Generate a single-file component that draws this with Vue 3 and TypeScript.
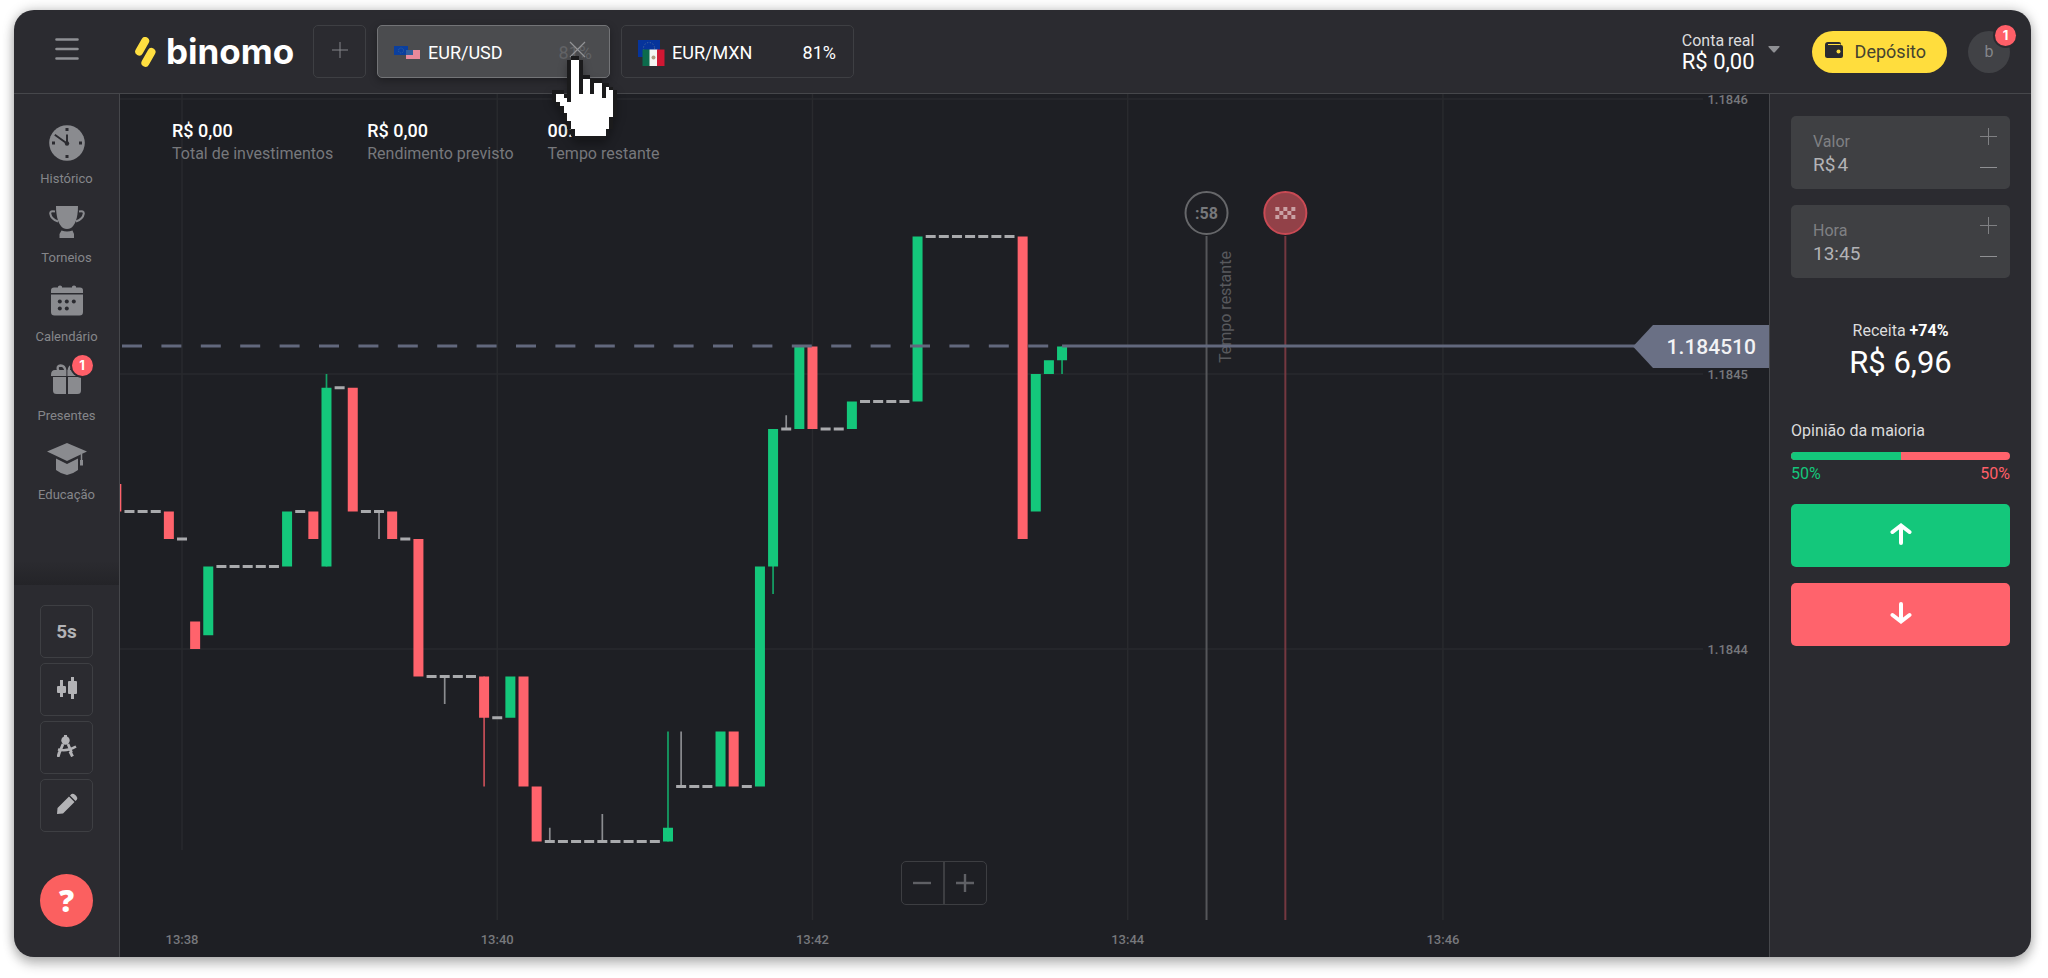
<script setup lang="ts">
import { computed, ref } from 'vue'

type Kind = 'up' | 'down' | 'flat'

interface Candle {
  n: number
  top: number
  bottom: number
  kind: Kind
  wickTop?: number
  wickBottom?: number
}

const STEP_X = 13.135
const STEP_Y = 13.75
const ORIGIN_X = 62
const ORIGIN_Y = 280

const xAt = (n: number): number => ORIGIN_X + n * STEP_X
const yAt = (level: number): number => ORIGIN_Y + level * STEP_Y

const up = (n: number, top: number, bottom: number, wick: Partial<Candle> = {}): Candle => ({ n, top, bottom, kind: 'up', ...wick })
const down = (n: number, top: number, bottom: number, wick: Partial<Candle> = {}): Candle => ({ n, top, bottom, kind: 'down', ...wick })
const flat = (from: number, to: number, level: number): Candle[] =>
  Array.from({ length: to - from + 1 }, (_, i) => ({ n: from + i, top: level, bottom: level, kind: 'flat' as Kind }))
const flatWick = (n: number, level: number, wick: Partial<Candle>): Candle => ({ n, top: level, bottom: level, kind: 'flat', ...wick })

const candles: Candle[] = [
  down(-5, 8, 10),
  ...flat(-4, -2, 10),
  down(-1, 10, 12),
  ...flat(0, 0, 12),
  down(1, 18, 20),
  up(2, 14, 19),
  ...flat(3, 7, 14),
  up(8, 10, 14),
  ...flat(9, 9, 10),
  down(10, 10, 12),
  up(11, 1, 14, { wickTop: 0 }),
  ...flat(12, 12, 1),
  down(13, 1, 10),
  ...flat(14, 14, 10),
  flatWick(15, 10, { wickBottom: 12 }),
  down(16, 10, 12),
  ...flat(17, 17, 12),
  down(18, 12, 22),
  ...flat(19, 19, 22),
  flatWick(20, 22, { wickBottom: 24 }),
  ...flat(21, 22, 22),
  down(23, 22, 25, { wickBottom: 30 }),
  ...flat(24, 24, 25),
  up(25, 22, 25),
  down(26, 22, 30),
  down(27, 30, 34),
  flatWick(28, 34, { wickTop: 33 }),
  ...flat(29, 31, 34),
  flatWick(32, 34, { wickTop: 32 }),
  ...flat(33, 36, 34),
  up(37, 33, 34, { wickTop: 26 }),
  flatWick(38, 30, { wickTop: 26 }),
  ...flat(39, 40, 30),
  up(41, 26, 30),
  down(42, 26, 30),
  ...flat(43, 43, 30),
  up(44, 14, 30),
  up(45, 4, 14, { wickBottom: 16 }),
  flatWick(46, 4, { wickTop: 3 }),
  up(47, -2, 4),
  down(48, -2, 4),
  ...flat(49, 50, 4),
  up(51, 2, 4),
  ...flat(52, 55, 2),
  up(56, -10, 2),
  ...flat(57, 63, -10),
  down(64, -10, 12),
  up(65, 0, 10),
  up(66, -1, 0),
  up(67, -2, -1, { wickBottom: 0 }),
]

const shapes = computed(() =>
  candles.map((c) => ({
    key: c.n,
    kind: c.kind,
    x: xAt(c.n) - 5,
    y: c.kind === 'flat' ? yAt(c.top) - 1.5 : yAt(c.top),
    height: c.kind === 'flat' ? 3 : yAt(c.bottom) - yAt(c.top),
    wick:
      c.wickTop !== undefined || c.wickBottom !== undefined
        ? { x: xAt(c.n), y1: yAt(c.wickTop ?? c.top), y2: yAt(c.wickBottom ?? c.bottom) }
        : null,
  })),
)

const times = [
  { label: '13:38', n: 0, end: 756 },
  { label: '13:40', n: 24, end: 826 },
  { label: '13:42', n: 48, end: 826 },
  { label: '13:44', n: 72, end: 826 },
  { label: '13:46', n: 96, end: 826 },
]
const prices = [
  { label: '1.1846', level: -20 },
  { label: '1.1845', level: 0 },
  { label: '1.1844', level: 20 },
]

const summary = [
  { value: 'R$ 0,00', label: 'Total de investimentos' },
  { value: 'R$ 0,00', label: 'Rendimento previsto' },
  { value: '00:00', label: 'Tempo restante' },
]

const nav = [
  { id: 'history', label: 'Histórico' },
  { id: 'cup', label: 'Torneios' },
  { id: 'calendar', label: 'Calendário' },
  { id: 'gift', label: 'Presentes', badge: 1 },
  { id: 'education', label: 'Educação' },
]

const flagCells = Array.from({ length: 15 }, (_, i) => ({ col: i % 5, row: Math.floor(i / 5) })).filter(
  (c) => (c.col + c.row) % 2 === 0,
)

const hand = [
  '.....XX..........',
  '....XooX.........',
  '....XooX.........',
  '....XooX.........',
  '....XooX.........',
  '....XooXXX.......',
  '....XooXooXXX....',
  '....XooXooXooXX..',
  '....XooXooXooXoX.',
  'XXX.XooXooXooXooX',
  'XooXXooooooooXooX',
  'XoooXoooooooooooX',
  '.XooooooooooooooX',
  '..XoooooooooooooX',
  '..XoooooooooooooX',
  '...XooooooooooooX',
  '...XoooooooooooX.',
  '....XooooooooooX.',
  '....XooooooooooX.',
  '.....XooooooooX..',
  '.....XooooooooX..',
  '......XXXXXXXX...',
]
const handRuns = hand.flatMap((row, y) =>
  [...row.matchAll(/X+|o+/g)].map((m) => ({ x: m.index ?? 0, y, w: m[0].length, dark: m[0][0] === 'X' })),
)

const amount = ref('4')
const expiry = ref('13:45')
const majority = ref(50)
</script>

<template>
  <div class="window">
    <header class="topbar">
      <button class="menu" type="button" aria-label="Menu">
        <svg width="24" height="22" viewBox="0 0 24 22"><path d="M1.500 1.500h21M1.500 11h21M1.500 20.500h21" stroke="#8f9094" stroke-width="2.600" stroke-linecap="round" /></svg>
      </button>
      <a class="logo" href="#">
        <svg width="21" height="30" viewBox="0 0 21 30">
          <path d="M10.200 4 4.200 14.500M16.500 15 10.400 25.800" stroke="#ffdf40" stroke-width="8" stroke-linecap="round" />
        </svg>
        <span>binomo</span>
      </a>
      <nav class="tabs">
        <button class="tab add" type="button" aria-label="Adicionar ativo">
          <svg width="16" height="16" viewBox="0 0 16 16"><path d="M0 8h16M8 0v16" stroke="#85868a" /></svg>
        </button>
        <div class="tab-wrap">
          <button class="tab active" type="button">
            <svg class="flags" width="27" height="14" viewBox="0 0 27 14">
              <rect width="14" height="9" fill="#0b3f9e" />
              <circle cx="7" cy="4.500" r="2.500" fill="none" stroke="#33629c" stroke-dasharray="1 1" />
              <rect x="12" y="4" width="14" height="9" fill="#e8899b" />
              <rect x="12" y="4" width="7" height="5" fill="#315f9d" />
            </svg>
            <span class="pair">EUR/USD</span>
            <span class="rate">81%</span>
          </button>
          <svg class="close" width="17" height="17" viewBox="0 0 17 17"><path d="m1 1 15 15M16 1 1 16" stroke="#929396" stroke-width="1.200" /></svg>
          <svg class="hand" width="65" height="84" viewBox="0 0 17 22" shape-rendering="crispEdges">
            <rect v-for="(r, i) in handRuns" :key="i" :x="r.x" :y="r.y" :width="r.w" height="1" :fill="r.dark ? '#1b1b1c' : '#fff'" />
          </svg>
        </div>
        <button class="tab" type="button">
          <svg class="flags" width="27" height="26" viewBox="0 0 27 26">
            <rect width="22" height="17" fill="#06349b" />
            <circle cx="11" cy="8" r="5.500" fill="none" stroke="#49699a" stroke-dasharray="1.200 1.700" />
            <path d="M4.500 9.500h8v16.500h-8z" fill="#0c6b4c" />
            <path d="M11.500 9.500h8v16.500h-8z" fill="#f4f4f2" />
            <path d="M19 9.500h7.500v16.500H19z" fill="#d01733" />
            <circle cx="15.500" cy="17.500" r="2" fill="#b09a80" />
          </svg>
          <span class="pair">EUR/MXN</span>
          <span class="rate">81%</span>
        </button>
      </nav>
      <div class="account">
        <button class="balance" type="button">
          <span class="balance-text"><small>Conta real</small><span>R$ 0,00</span></span>
          <svg width="12" height="7" viewBox="0 0 12 7"><path d="M1 0h10q1 0 .5 1L7 6q-1 1-2 0L.5 1Q0 0 1 0Z" fill="#8f9094" /></svg>
        </button>
        <button class="deposit" type="button">
          <svg width="18" height="16" viewBox="0 0 18 16">
            <path d="M3 0h11q2 0 2 2v1q2 0 2 2v9q0 2-2 2H2.500Q0 16 0 13.500V3Q0 0 3 0Z" fill="#2b2b30" />
            <path d="M3 2.500h12.500" stroke="#ffdd3d" stroke-width="1.200" />
            <circle cx="13.500" cy="9.500" r="2" fill="#ffdd3d" />
          </svg>
          <span>Depósito</span>
        </button>
        <button class="avatar" type="button">b<span class="badge">1</span></button>
      </div>
    </header>

    <div class="body">
      <aside class="sidebar">
        <nav class="nav">
          <a v-for="item in nav" :key="item.id" class="nav-item" href="#">
            <span class="nav-icon">
              <svg v-if="item.id === 'history'" width="36" height="36" viewBox="0 0 36 36">
                <circle cx="18" cy="18" r="17.800" fill="#8a8b8f" />
                <g fill="#2b2b30"><rect x="16.500" y="3" width="3" height="3" /><rect x="16.500" y="30" width="3" height="3" /><rect x="3" y="16.500" width="3" height="3" /><rect x="30" y="16.500" width="3" height="3" /><circle cx="18" cy="18.500" r="2.200" /></g>
                <path d="M18 18.500V9.500M18 18.500 5.800 9.800" stroke="#2b2b30" stroke-width="2" />
              </svg>
              <svg v-else-if="item.id === 'cup'" width="36" height="32" viewBox="0 0 36 32">
                <path d="M7 0h22c0 12-3 19-7 22q-4 2-8 0C10 19 7 12 7 0Z" fill="#8a8b8f" />
                <path d="M12.500 24.500q5.500 2 11 0L25 28v4H10.500v-4Z" fill="#8a8b8f" />
                <path d="M6 5.500Q1 4.500 1.200 7.500 2 13 9 15.500M30 5.500q5-1 4.800 2Q34 13 27 15.500" fill="none" stroke="#8a8b8f" stroke-width="2" />
              </svg>
              <svg v-else-if="item.id === 'calendar'" width="32" height="31" viewBox="0 0 32 31">
                <path d="M0 8V5.500Q0 2.500 3 2.500h4V1.500Q9 -.5 11 1.500v1h10v-1q2-2 4 0v1h4q3 0 3 3V8ZM0 9.500h32V27q0 3.500-3.500 3.500h-25Q0 30.500 0 27Z" fill="#8a8b8f" />
                <g fill="#2b2b30"><circle cx="8.800" cy="16.500" r="2" /><circle cx="15.800" cy="16.500" r="2" /><circle cx="22.800" cy="16.500" r="2" /><circle cx="8.800" cy="23.500" r="2" /><circle cx="15.800" cy="23.500" r="2" /></g>
              </svg>
              <svg v-else-if="item.id === 'gift'" width="32" height="31" viewBox="0 0 32 31">
                <path d="M0 11q0-5 4-5h24q4 0 4 5v1H0ZM2 13h13v17H5.500Q2 30 2 26.500ZM17 13h13v13.500Q30 30 26.500 30H17Z" fill="#8a8b8f" />
                <path d="M14.500 7.500Q14 1.500 9.500 1.500 5 2 7.500 7M17.500 7.500Q18 1.500 22.500 1.500 27 2 24.500 7" fill="none" stroke="#8a8b8f" stroke-width="2.400" />
                <path d="M15.900 6v24" stroke="#2b2b30" />
              </svg>
              <svg v-else width="40" height="32" viewBox="0 0 40 32">
                <path d="M0 8.500 20 0l20 8.500L20 18ZM9 15.500l11 5.500 11-5.500V27q-5 4-11 5-6-1-11-5Z" fill="#8a8b8f" />
                <path d="M34.500 11v7" stroke="#8a8b8f" stroke-width="1.500" /><path d="M34.500 17v5.500" stroke="#8a8b8f" stroke-width="3" />
              </svg>
              <span v-if="item.badge" class="badge">{{ item.badge }}</span>
            </span>
            <span>{{ item.label }}</span>
          </a>
        </nav>
        <div class="tools">
          <button class="tool" type="button">5s</button>
          <button class="tool" type="button" aria-label="Tipo de gráfico">
            <svg width="20" height="22" viewBox="0 0 20 22" fill="#b3b3b6">
              <rect y="9" width="9" height="7" rx="1" /><rect x="3" y="3" width="3" height="17" /><rect x="11" y="4" width="9" height="13" rx="1" /><rect x="14" width="3" height="22" />
            </svg>
          </button>
          <button class="tool" type="button" aria-label="Indicadores">
            <svg width="20" height="22" viewBox="0 0 20 22" fill="none" stroke="#b3b3b6">
              <circle cx="8.500" cy="5.500" r="4.200" fill="#b3b3b6" stroke="none" /><path d="M8.500 0v4" stroke-width="3" />
              <path d="M6 9 2.500 17.500M11 9l3.500 8.500" stroke-width="2.800" /><path d="M2.500 17 1 22M13 16.500l2.500 5" stroke-width="3" />
              <path d="M1 14.500q9 2.500 18-3" stroke-width="2.400" />
            </svg>
          </button>
          <button class="tool" type="button" aria-label="Desenho">
            <svg width="22" height="22" viewBox="0 0 22 22" fill="#b3b3b6">
              <path d="M1 21 1.500 15 13 3.500l5.500 5.500L7 20.500ZM14 2.500l1.500-1.500q1.500-1 3.500.7l1.300 1.300q1.700 2 .7 3.500L19.500 8Z" />
            </svg>
          </button>
          <button class="help" type="button" aria-label="Ajuda">?</button>
        </div>
      </aside>

      <main class="chart">
        <svg class="plot" viewBox="0 0 1649 863" preserveAspectRatio="xMaxYMin meet">
          <defs>
            <clipPath id="plot-area"><rect width="1649" height="863" /></clipPath>
          </defs>
          <g class="grid">
            <line v-for="t in times" :key="t.label" :x1="xAt(t.n)" :x2="xAt(t.n)" y1="0" :y2="t.end" />
            <line v-for="p in prices" :key="p.label" x1="0" x2="1583" :y1="yAt(p.level)" :y2="yAt(p.level)" />
          </g>
          <text v-for="t in times" :key="t.label" class="axis" :x="xAt(t.n)" y="850" text-anchor="middle">{{ t.label }}</text>
          <text v-for="p in prices" :key="p.label" class="axis" x="1628" :y="yAt(p.level) + 5" text-anchor="end">{{ p.label }}</text>

          <g clip-path="url(#plot-area)">
            <g v-for="s in shapes" :key="s.key" :class="s.kind">
              <line v-if="s.wick" class="wick" :x1="s.wick.x" :x2="s.wick.x" :y1="s.wick.y1" :y2="s.wick.y2" />
              <rect :x="s.x" :y="s.y" width="10" :height="s.height" />
            </g>
          </g>

          <line class="deadline" :x1="xAt(78)" :x2="xAt(78)" y1="142" y2="826" />
          <circle class="deadline" :cx="xAt(78)" cy="119" r="21" />
          <text class="seconds" :x="xAt(78)" y="125" text-anchor="middle">:58</text>
          <text class="remaining" :transform="`translate(${xAt(78) + 24} 269) rotate(-90)`">Tempo restante</text>
          <line class="expiry" :x1="xAt(84)" :x2="xAt(84)" y1="142" y2="826" />
          <circle class="expiry-dot" :cx="xAt(84)" cy="119" r="21" />
          <rect v-for="(c, i) in flagCells" :key="i" class="check" :x="xAt(84) - 10 + c.col * 4" :y="113 + c.row * 4" width="4" height="4" />

          <line class="current dashed" x1="2" :x2="xAt(67)" :y1="yAt(-2) - 0.5" :y2="yAt(-2) - 0.5" />
          <line class="current" :x1="xAt(67)" x2="1520" :y1="yAt(-2) - 0.5" :y2="yAt(-2) - 0.5" />
          <path class="price-tag" d="M1513 252.500 1533 231h116v43h-116Z" />
          <text class="price" x="1636" y="260" text-anchor="end">1.184510</text>
        </svg>

        <dl class="summary">
          <div v-for="s in summary" :key="s.label"><dd>{{ s.value }}</dd><dt>{{ s.label }}</dt></div>
        </dl>

        <div class="zoom">
          <button type="button" aria-label="Diminuir zoom"><svg width="18" height="18" viewBox="0 0 18 18"><path d="M0 9h18" stroke="#5f6065" stroke-width="2.400" /></svg></button>
          <button type="button" aria-label="Aumentar zoom"><svg width="18" height="18" viewBox="0 0 18 18"><path d="M0 9h18M9 0v18" stroke="#5f6065" stroke-width="2.400" /></svg></button>
        </div>
      </main>

      <aside class="panel">
        <div class="field">
          <div class="field-main">
            <label for="amount">Valor</label>
            <div class="field-value"><span>R$</span><input id="amount" v-model="amount" type="text" /></div>
          </div>
          <div class="stepper">
            <button type="button" aria-label="Aumentar valor"><svg width="17" height="17" viewBox="0 0 17 17"><path d="M0 8.500h17M8.500 0v17" stroke="#7f8083" /></svg></button>
            <button type="button" aria-label="Diminuir valor"><svg width="17" height="17" viewBox="0 0 17 17"><path d="M0 8.500h17" stroke="#8f9093" /></svg></button>
          </div>
        </div>
        <div class="field">
          <div class="field-main">
            <label for="expiry">Hora</label>
            <div class="field-value"><input id="expiry" v-model="expiry" type="text" /></div>
          </div>
          <div class="stepper">
            <button type="button" aria-label="Aumentar hora"><svg width="17" height="17" viewBox="0 0 17 17"><path d="M0 8.500h17M8.500 0v17" stroke="#7f8083" /></svg></button>
            <button type="button" aria-label="Diminuir hora"><svg width="17" height="17" viewBox="0 0 17 17"><path d="M0 8.500h17" stroke="#8f9093" /></svg></button>
          </div>
        </div>
        <div class="income">
          <p>Receita <b>+74%</b></p>
          <strong>R$ 6,96</strong>
        </div>
        <div class="majority">
          <p>Opinião da maioria</p>
          <div class="bar"><span :style="{ width: majority + '%' }"></span></div>
          <div class="shares"><span class="green">{{ majority }}%</span><span class="red">{{ 100 - majority }}%</span></div>
        </div>
        <button class="trade buy" type="button" aria-label="Para cima">
          <svg width="22" height="22" viewBox="0 0 22 22"><path d="M11 20V3M2.500 9 11 2.500 19.500 9" /></svg>
        </button>
        <button class="trade sell" type="button" aria-label="Para baixo">
          <svg width="22" height="22" viewBox="0 0 22 22"><path d="M11 2v17M2.500 13l8.500 6.500 8.500-6.500" /></svg>
        </button>
      </aside>
    </div>
  </div>
</template>

<style>
body {
  background: #fff;
}
</style>

<style scoped>
* {
  box-sizing: border-box;
}
.window {
  display: flex;
  flex-direction: column;
  height: calc(100vh - 31px);
  min-height: 760px;
  margin: 10px 17px 21px 14px;
  overflow: hidden;
  border-radius: 20px;
  background: #2b2b30;
  color: #fff;
  font-family: Roboto, "Liberation Sans", sans-serif;
  font-size: 16px;
  line-height: 20px;
  box-shadow: 0 8px 12px rgba(0, 0, 0, 0.2), 0 0 12px rgba(0, 0, 0, 0.25);
}
button {
  padding: 0;
  border: 0;
  background: none;
  color: inherit;
  font: inherit;
}
a {
  color: inherit;
  text-decoration: none;
}
p,
dl,
dd {
  margin: 0;
}
svg {
  display: block;
  flex: none;
}
.topbar {
  position: relative;
  z-index: 2;
  display: flex;
  flex: none;
  align-items: center;
  height: 84px;
  padding-right: 21px;
  border-bottom: 1px solid #46474b;
}
.menu {
  display: flex;
  flex: none;
  justify-content: center;
  width: 105px;
  padding-bottom: 6px;
}
.logo {
  display: flex;
  flex: none;
  align-items: center;
  gap: 10px;
  width: 194px;
  padding-left: 16px;
  font: 700 35px/36px Inter, sans-serif;
}
.logo span {
  padding-bottom: 2px;
}
.tabs {
  display: flex;
  gap: 11px;
}
.tab-wrap {
  position: relative;
}
.tab {
  display: flex;
  align-items: center;
  width: 233px;
  height: 53px;
  padding: 3px 17px 0 16px;
  border: 1px solid #3e3f43;
  border-radius: 5px;
  font-size: 18px;
}
.tab.add {
  justify-content: center;
  width: 53px;
  padding: 0 0 4px;
}
.tab.active {
  border-color: #737477;
  background: #4b4c4f;
  box-shadow: 0 3px 8px rgba(0, 0, 0, 0.3);
}
.pair {
  margin-left: 7px;
}
.rate {
  margin-left: auto;
}
.active .rate {
  color: #626366;
}
.close {
  position: absolute;
  top: 16px;
  right: 24px;
}
.hand {
  position: absolute;
  top: 31px;
  left: 175px;
  filter: drop-shadow(0 4px 4px rgba(0, 0, 0, 0.3));
}
.account {
  display: flex;
  align-items: center;
  margin-left: auto;
}
.balance {
  display: flex;
  align-items: center;
  gap: 13px;
  margin-right: 32px;
  text-align: left;
}
.balance svg {
  margin-bottom: 4px;
}
.balance-text {
  display: flex;
  flex-direction: column;
  font-size: 22px;
  line-height: 22px;
}
.balance-text small {
  color: #dcdcdd;
  font-size: 16px;
  line-height: 20px;
}
.deposit {
  display: flex;
  align-items: center;
  gap: 12px;
  height: 42px;
  margin-right: 21px;
  padding: 0 21px 0 13px;
  border-radius: 21px;
  background: #ffdd3d;
  color: #45432f;
  font-size: 18px;
}
.deposit svg {
  margin-bottom: 4px;
}
.avatar {
  position: relative;
  width: 42px;
  height: 42px;
  border-radius: 50%;
  background: #414246;
  color: #85868a;
  font-size: 16px;
}
.badge {
  position: absolute;
  top: -6px;
  right: -6px;
  width: 21px;
  height: 21px;
  border-radius: 50%;
  background: #ff5f68;
  box-shadow: 0 0 0 2px #2b2b30;
  color: #fff;
  font: 700 13px/21px Inter, sans-serif;
  text-align: center;
}
.body {
  display: flex;
  flex: 1;
  min-height: 0;
}
.sidebar {
  position: relative;
  display: flex;
  flex: none;
  flex-direction: column;
  width: 106px;
  border-right: 1px solid #46474b;
}
.nav {
  display: flex;
  flex: none;
  flex-direction: column;
  height: 491px;
  padding-top: 30px;
  background: linear-gradient(to top, #242428, transparent 24px);
}
.nav-item {
  display: flex;
  flex: none;
  flex-direction: column;
  align-items: center;
  gap: 8px;
  height: 79px;
  color: #85868a;
  font-size: 13px;
}
.nav-icon {
  position: relative;
  display: grid;
  place-items: center;
  height: 37px;
}
.nav-icon .badge {
  top: -6px;
  right: -10px;
}
.tools {
  display: flex;
  flex: 1;
  flex-direction: column;
  align-items: center;
  gap: 5px;
  padding: 20px 0 30px;
}
.tool {
  display: grid;
  flex: none;
  place-items: center;
  width: 53px;
  height: 53px;
  border: 1px solid #3e3f43;
  border-radius: 5px;
  color: #b3b3b6;
  font-size: 19px;
  font-weight: 700;
}
.tool svg {
  margin-bottom: 4px;
}
.help {
  flex: none;
  width: 53px;
  height: 53px;
  margin-top: auto;
  border-radius: 50%;
  background: #fb6060;
  font: 800 30px/53px "Open Sans", sans-serif;
}
.chart {
  position: relative;
  flex: 1;
  min-width: 0;
  background: #1e1f24;
}
.plot {
  width: 100%;
  height: 100%;
  overflow: visible;
}
.plot text {
  font-family: Roboto, sans-serif;
}
.grid line {
  stroke: #292a2e;
  stroke-width: 1.500;
}
.plot .axis {
  fill: #77787c;
  font-size: 13px;
  font-weight: 500;
}
.up rect {
  fill: #14c77b;
}
.down rect {
  fill: #ff636c;
}
.flat rect {
  fill: #a9aaad;
}
.wick {
  stroke-width: 1.700;
}
.up .wick {
  stroke: #14a366;
}
.down .wick {
  stroke: #c74f58;
}
.flat .wick {
  stroke: #8b8c90;
}
.current {
  stroke: #62687d;
  stroke-width: 3;
}
.dashed {
  stroke-dasharray: 20 19.400;
}
.price-tag {
  fill: #6a7085;
}
.price {
  fill: #f2f2f4;
  font-size: 21px;
  font-weight: 500;
}
.deadline {
  fill: #1e1f24;
  stroke: #66676a;
  stroke-width: 2;
}
line.deadline {
  stroke: #55565a;
}
.seconds {
  fill: #77787b;
  font-size: 16px;
  font-weight: 700;
}
.remaining {
  fill: #58595d;
  font-size: 16px;
}
.expiry {
  stroke: #743840;
  stroke-width: 2;
}
.expiry-dot {
  fill: #924148;
  stroke: #c94a54;
  stroke-width: 2;
}
.check {
  fill: #c9a0a4;
}
.summary {
  position: absolute;
  top: 26px;
  left: 52px;
  display: flex;
  gap: 34px;
}
.summary div {
  display: flex;
  flex-direction: column;
}
.summary dd {
  font-size: 18px;
  font-weight: 500;
  line-height: 22px;
}
.summary dt {
  color: #77787c;
  line-height: 24px;
}
.zoom {
  position: absolute;
  bottom: 52px;
  left: 50%;
  display: flex;
  width: 86px;
  height: 44px;
  margin-left: -44px;
  border: 1px solid #3d3e42;
  border-radius: 5px;
}
.zoom button {
  display: grid;
  flex: 1;
  place-items: center;
}
.zoom button + button {
  border-left: 2px solid #3d3e42;
}
.panel {
  display: flex;
  flex: none;
  flex-direction: column;
  gap: 16px;
  width: 262px;
  padding: 22px 21px 0;
  border-left: 1px solid #46474b;
}
.field {
  display: flex;
  flex: none;
  height: 73px;
  padding: 15px 13px 0 22px;
  border-radius: 5px;
  background: #3f4043;
}
.field-main {
  flex: 1;
  min-width: 0;
}
.field label {
  display: block;
  color: #7f8083;
  line-height: 22px;
}
.field-value {
  display: flex;
  gap: 2px;
  color: #b3b3b6;
  font-size: 19px;
  line-height: 24px;
}
.field input {
  flex: 1;
  min-width: 0;
  height: 24px;
  padding: 0;
  border: 0;
  outline: 0;
  background: none;
  color: inherit;
  font: inherit;
}
.stepper {
  display: flex;
  flex-direction: column;
  gap: 14px;
  margin-top: -3px;
}
.income {
  padding: 27px 0 0;
  text-align: center;
}
.income p {
  color: #dcdcdd;
}
.income b {
  color: #fff;
}
.income strong {
  display: block;
  font-size: 31px;
  font-weight: 400;
  line-height: 43px;
}
.majority {
  padding-top: 21px;
}
.majority p {
  color: #dcdcdd;
}
.bar {
  height: 8px;
  margin: 11px 0 4px;
  overflow: hidden;
  border-radius: 4px;
  background: #ff636c;
}
.bar span {
  display: block;
  height: 100%;
  background: #14c77b;
}
.shares {
  display: flex;
  justify-content: space-between;
}
.green {
  color: #14c77b;
}
.red {
  color: #ff5f68;
}
.trade {
  display: grid;
  flex: none;
  place-items: center;
  height: 63px;
  border-radius: 5px;
}
.trade svg {
  margin-bottom: 3px;
  fill: none;
  stroke: #fff;
  stroke-width: 4;
  stroke-linecap: round;
}
.buy {
  margin-top: 4px;
  background: #14c77b;
}
.sell {
  background: #ff636c;
}
</style>
